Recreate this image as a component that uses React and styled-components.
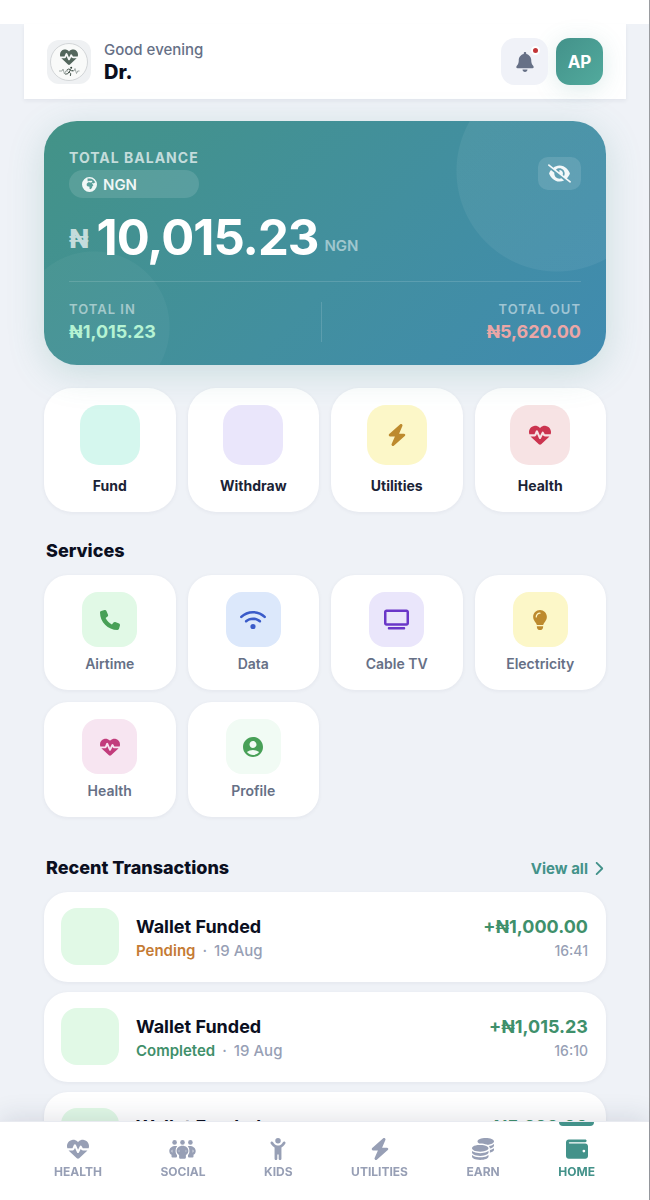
import React from "react";
import styled, { createGlobalStyle } from "styled-components";
import {
  FaBell,
  FaBolt,
  FaChevronRight,
  FaChildReaching,
  FaCoins,
  FaEarthAfrica,
  FaEyeSlash,
  FaHeartPulse,
  FaLightbulb,
  FaPhone,
  FaTv,
  FaWallet,
  FaWifi,
} from "react-icons/fa6";
import { MdAccountCircle } from "react-icons/md";

const colors = {
  primary: "#43928a",
  page: "#eff2f7",
  ink: "#0b0f1f",
  text: "#1b2336",
  muted: "#667086",
  faint: "#979fb5",
  green: "#3f906b",
  orange: "#c57b34",
  white: "#ffffff",
};

const quickActions = [
  { label: "Fund", bg: "#d5f7ee" },
  { label: "Withdraw", bg: "#eae6fb" },
  { label: "Utilities", bg: "#fcf7c8", color: "#bd8a2e", icon: <FaBolt /> },
  { label: "Health", bg: "#f7e3e4", color: "#cb344f", icon: <FaHeartPulse /> },
];

const services = [
  { label: "Airtime", bg: "#e1f9e6", color: "#48a057", icon: <FaPhone /> },
  { label: "Data", bg: "#dce8fb", color: "#3a5bc9", icon: <FaWifi size={26} /> },
  { label: "Cable TV", bg: "#eae6fb", color: "#6a37c8", icon: <FaTv size={25} /> },
  { label: "Electricity", bg: "#fcf7c8", color: "#bd8a2e", icon: <FaLightbulb /> },
  { label: "Health", bg: "#f7e5f1", color: "#c23c7c", icon: <FaHeartPulse /> },
  { label: "Profile", bg: "#f1fbf4", color: "#48a057", icon: <MdAccountCircle size={24} /> },
];

const transactions = [
  { id: 1, status: "Pending", date: "19 Aug", amount: "+₦1,000.00", time: "16:41" },
  { id: 2, status: "Completed", date: "19 Aug", amount: "+₦1,015.23", time: "16:10" },
  { id: 3, status: "Completed", date: "19 Aug", amount: "+₦5,620.00", time: "15:52" },
];

const navItems = [
  { label: "Health", icon: <FaHeartPulse /> },
  { label: "Social", icon: <PeopleIcon /> },
  { label: "Kids", icon: <FaChildReaching /> },
  { label: "Utilities", icon: <FaBolt /> },
  { label: "Earn", icon: <FaCoins /> },
  { label: "Home", icon: <FaWallet />, active: true },
];

function PeopleIcon() {
  return (
    <svg viewBox="0 0 27 21" width="27" height="21" fill="currentColor" aria-hidden="true">
      <circle cx="5.600" cy="3.400" r="2.300" />
      <circle cx="13.500" cy="3.400" r="2.300" />
      <circle cx="21.400" cy="3.400" r="2.300" />
      <path
        fillRule="evenodd"
        d="M6.500 7C3 7 .3 9 .3 12c0 2 .9 3.200 2.200 3.800v1.700a1 1 0 0 0 1 1H7a1 1 0 0 0 1-1V16c-.9-1-1.400-2.400-1.400-4 0-2 .6-3.600 1.600-4.800C7.700 7 7.100 7 6.500 7ZM3.300 10.500v3.200c-1-.9-1-2.300 0-3.200Z"
      />
      <path
        fillRule="evenodd"
        d="M20.500 7c3.500 0 6.200 2 6.200 5 0 2-.9 3.200-2.200 3.800v1.700a1 1 0 0 1-1 1H20a1 1 0 0 1-1-1V16c.9-1 1.400-2.400 1.400-4 0-2-.6-3.600-1.600-4.800.5-.2 1.100-.2 1.700-.2Zm3.200 3.500v3.200c1-.9 1-2.300 0-3.200Z"
      />
      <path
        fillRule="evenodd"
        d="M13.500 6.800c-3.400 0-5.900 2.100-5.900 5.200 0 1.800.9 3.200 2.500 3.900v2.300c0 1 .7 1.600 1.600 1.600h3.600c.9 0 1.600-.6 1.600-1.600v-2.300c1.600-.7 2.500-2.100 2.500-3.900 0-3.100-2.500-5.200-5.900-5.200Zm-3.300 3.900v2.600c-.6-.7-.6-1.900 0-2.600Zm6.600 0c.6.700.6 1.900 0 2.600v-2.600Z"
      />
    </svg>
  );
}

function Logo() {
  return (
    <LogoSvg viewBox="0 0 44 44" role="img" aria-label="Heart and runner logo">
      <rect width="44" height="44" rx="12" fill="#eff1f3" />
      <circle cx="22" cy="22" r="18.500" fill="#f9faf9" stroke="#d3d6d8" />
      <FaHeartPulse x="13" y="8" size={18} color="#53665c" />
      <path
        d="M12 31h3l1-2 1.500 5 1.300-3H21m4 0h2l1-2.500 1.500 5 1.200-2.500h1.800"
        fill="none"
        stroke="#8d9894"
        strokeWidth=".8"
      />
      <circle cx="24.200" cy="27.800" r="1" fill="#33443b" />
      <path
        d="M20 30l1.700-1 1.800.7-1.300 2.500 1.600 1.400-.4 2M21.900 31.900l-1.200 1.900-2.200.3M23.300 29.700l1.100 1.200 1.500-.3"
        fill="none"
        stroke="#33443b"
        strokeWidth=".9"
        strokeLinecap="round"
      />
    </LogoSvg>
  );
}

function Tile({ item, size }) {
  return (
    <TileButton type="button" $size={size}>
      <TileIcon $size={size} $bg={item.bg} $color={item.color}>
        {item.icon}
      </TileIcon>
      <TileLabel $size={size}>{item.label}</TileLabel>
    </TileButton>
  );
}

function TransactionRow({ item }) {
  return (
    <Transaction>
      <TransactionIcon />
      <TransactionBody>
        <TransactionTitle>Wallet Funded</TransactionTitle>
        <TransactionMeta>
          <Status $pending={item.status === "Pending"}>{item.status}</Status>
          <span>·</span>
          <span>{item.date}</span>
        </TransactionMeta>
      </TransactionBody>
      <TransactionSide>
        <Amount>{item.amount}</Amount>
        <Time>{item.time}</Time>
      </TransactionSide>
    </Transaction>
  );
}

export default function App() {
  return (
    <>
      <GlobalStyle />
      <Page>
        <TopStrip />
        <Header>
          <Logo />
          <Greeting>
            <GreetingText>Good evening</GreetingText>
            <UserName>Dr.</UserName>
          </Greeting>
          <HeaderActions>
            <BellButton type="button" aria-label="Notifications">
              <FaBell />
              <BellDot />
            </BellButton>
            <Avatar type="button">AP</Avatar>
          </HeaderActions>
        </Header>

        <Main>
          {/* BALANCE */}
          <BalanceCard>
            <BalanceTop>
              <BalanceHeading>
                <BalanceLabel>TOTAL BALANCE</BalanceLabel>
                <CurrencyPill type="button">
                  <FaEarthAfrica />
                  NGN
                </CurrencyPill>
              </BalanceHeading>
              <EyeButton type="button" aria-label="Hide balance">
                <FaEyeSlash />
              </EyeButton>
            </BalanceTop>
            <BalanceAmount>
              <Naira>₦</Naira>
              <Figure>10,015.23</Figure>
              <Currency>NGN</Currency>
            </BalanceAmount>
            <Totals>
              <Total>
                <TotalLabel>TOTAL IN</TotalLabel>
                <TotalValue $color="#b5f3d3">₦1,015.23</TotalValue>
              </Total>
              <TotalsDivider />
              <Total $right>
                <TotalLabel>TOTAL OUT</TotalLabel>
                <TotalValue $color="#eba6a6">₦5,620.00</TotalValue>
              </Total>
            </Totals>
          </BalanceCard>

          <Grid>
            {quickActions.map((item) => (
              <Tile key={item.label} item={item} size="large" />
            ))}
          </Grid>

          {/* SERVICES */}
          <SectionHeader>
            <SectionTitle>Services</SectionTitle>
          </SectionHeader>
          <Grid>
            {services.map((item) => (
              <Tile key={item.label} item={item} />
            ))}
          </Grid>

          {/* TRANSACTIONS */}
          <SectionHeader $wide>
            <SectionTitle>Recent Transactions</SectionTitle>
            <ViewAll href="#transactions">
              View all
              <FaChevronRight />
            </ViewAll>
          </SectionHeader>
          <TransactionList>
            {transactions.map((item) => (
              <TransactionRow key={item.id} item={item} />
            ))}
          </TransactionList>
        </Main>

        <BottomNav>
          {navItems.map((item) => (
            <NavLink key={item.label} href={"#" + item.label.toLowerCase()} $active={item.active}>
              <NavIcon>{item.icon}</NavIcon>
              {item.label.toUpperCase()}
            </NavLink>
          ))}
        </BottomNav>
      </Page>
    </>
  );
}

const GlobalStyle = createGlobalStyle`
  * {
    box-sizing: border-box;
  }

  body {
    margin: 0;
    background: ${colors.page};
    color: ${colors.ink};
    font-family: Inter, "Liberation Sans", sans-serif;
  }

  button {
    border: 0;
    padding: 0;
    font-family: inherit;
    cursor: pointer;
  }

  a {
    text-decoration: none;
  }
`;

const Page = styled.div`
  min-height: 100vh;
  border-right: 1px solid #9a9ca0;
`;

const TopStrip = styled.div`
  height: 24px;
  background: ${colors.white};
`;

const Header = styled.header`
  display: flex;
  align-items: center;
  gap: 13px;
  margin: 0 23px 0 24px;
  padding: 14px 23px;
  background: ${colors.white};
  box-shadow: 0 2px 4px rgba(30, 41, 70, 0.06);
`;

const LogoSvg = styled.svg`
  width: 44px;
  height: 44px;
`;

const Greeting = styled.div`
  flex: 1;
`;

const GreetingText = styled.div`
  font-size: 15px;
  line-height: 20px;
  font-weight: 500;
  color: ${colors.muted};
`;

const UserName = styled.div`
  font-size: 20px;
  line-height: 24px;
  font-weight: 800;
`;

const HeaderActions = styled.div`
  display: flex;
  gap: 8px;
`;

const BellButton = styled.button`
  position: relative;
  display: grid;
  place-items: center;
  width: 47px;
  height: 47px;
  border-radius: 14px;
  background: #f0f2f8;
  color: ${colors.muted};
  font-size: 20px;
`;

const BellDot = styled.span`
  position: absolute;
  top: 8px;
  right: 8px;
  width: 9px;
  height: 9px;
  border: 2px solid ${colors.white};
  border-radius: 50%;
  background: #c23436;
`;

const Avatar = styled.button`
  width: 47px;
  height: 47px;
  border-radius: 14px;
  background: linear-gradient(135deg, #43928a, #52aa9d);
  box-shadow: 0 4px 24px rgba(67, 146, 138, 0.18);
  color: ${colors.white};
  font-size: 17px;
  font-weight: 700;
`;

const Main = styled.main`
  padding: 22px 43px 18px 44px;
`;

const BalanceCard = styled.section`
  position: relative;
  z-index: 1;
  padding: 28px 25px 19px;
  border-radius: 33px;
  /* soft circles in two corners over the base gradient */
  background:
    radial-gradient(circle at calc(100% - 49px) 50px, rgba(255, 255, 255, 0.06) 100px, transparent 101px),
    radial-gradient(circle at 50px calc(100% - 38px), rgba(255, 255, 255, 0.04) 75px, transparent 76px),
    linear-gradient(135deg, #439387 0%, #428f9f 55%, #408bb0 100%);
  box-shadow: 0 8px 36px rgba(67, 146, 138, 0.22);
  color: ${colors.white};
`;

const BalanceTop = styled.div`
  display: flex;
  align-items: center;
  justify-content: space-between;
`;

const BalanceHeading = styled.div`
  display: flex;
  flex-direction: column;
  gap: 3px;
`;

const BalanceLabel = styled.div`
  font-size: 14px;
  line-height: 18px;
  font-weight: 700;
  letter-spacing: 1px;
  color: rgba(255, 255, 255, 0.7);
`;

const CurrencyPill = styled.button`
  display: flex;
  align-items: center;
  gap: 6px;
  height: 28px;
  padding: 0 13px;
  border-radius: 14px;
  background: rgba(255, 255, 255, 0.12);
  color: rgba(255, 255, 255, 0.92);
  font-size: 15px;
  font-weight: 600;
`;

const EyeButton = styled.button`
  display: grid;
  place-items: center;
  width: 43px;
  height: 33px;
  border-radius: 10px;
  background: rgba(255, 255, 255, 0.12);
  color: rgba(255, 255, 255, 0.92);
  font-size: 23px;
`;

const BalanceAmount = styled.div`
  display: flex;
  align-items: center;
  margin: 12px 0 15px;
`;

const Naira = styled.span`
  font-size: 26px;
  font-weight: 800;
  color: rgba(255, 255, 255, 0.7);
`;

const Figure = styled.strong`
  margin: 0 6px 0 8px;
  font-size: 49px;
  line-height: 56px;
  font-weight: 700;
  letter-spacing: -1px;
`;

const Currency = styled.span`
  padding-top: 14px;
  font-size: 15px;
  font-weight: 600;
  color: rgba(255, 255, 255, 0.5);
`;

const Totals = styled.div`
  display: flex;
  justify-content: space-between;
  padding-top: 18px;
  border-top: 1px solid rgba(255, 255, 255, 0.14);
`;

const Total = styled.div`
  text-align: ${(props) => (props.$right ? "right" : "left")};
`;

const TotalsDivider = styled.div`
  width: 1px;
  height: 40px;
  margin-top: 2px;
  background: rgba(255, 255, 255, 0.14);
`;

const TotalLabel = styled.div`
  font-size: 13px;
  line-height: 18px;
  font-weight: 600;
  letter-spacing: 1px;
  color: rgba(255, 255, 255, 0.5);
`;

const TotalValue = styled.div`
  font-size: 18px;
  line-height: 28px;
  font-weight: 700;
  color: ${(props) => props.$color};
`;

const Grid = styled.div`
  display: grid;
  grid-template-columns: repeat(4, 1fr);
  gap: 12px;

  ${BalanceCard} + & {
    margin-top: 23px;
  }
`;

const TileButton = styled.button`
  display: flex;
  flex-direction: column;
  align-items: center;
  gap: ${(props) => (props.$size === "large" ? "11px" : "7px")};
  padding: 17px 8px 16px;
  border-radius: ${(props) => (props.$size === "large" ? "28px" : "24px")};
  background: ${colors.white};
  box-shadow: 0 1px 4px rgba(30, 41, 70, 0.06);
`;

const TileIcon = styled.span`
  display: grid;
  place-items: center;
  width: ${(props) => (props.$size === "large" ? "60px" : "55px")};
  height: ${(props) => (props.$size === "large" ? "60px" : "55px")};
  border-radius: ${(props) => (props.$size === "large" ? "19px" : "16px")};
  background: ${(props) => props.$bg};
  color: ${(props) => props.$color};
  font-size: ${(props) => (props.$size === "large" ? "22px" : "20px")};
`;

const TileLabel = styled.span`
  font-size: 14px;
  line-height: 20px;
  font-weight: ${(props) => (props.$size === "large" ? 700 : 600)};
  color: ${(props) => (props.$size === "large" ? colors.text : colors.muted)};
`;

const SectionHeader = styled.div`
  display: flex;
  align-items: center;
  justify-content: space-between;
  margin: ${(props) => (props.$wide ? "39px 0 12px 2px" : "27px 0 12px 2px")};
`;

const SectionTitle = styled.h2`
  margin: 0;
  font-size: 18px;
  line-height: 24px;
  font-weight: 800;
`;

const ViewAll = styled.a`
  display: flex;
  align-items: center;
  gap: 3px;
  font-size: 15px;
  font-weight: 700;
  color: ${colors.primary};
`;

const TransactionList = styled.div`
  display: flex;
  flex-direction: column;
  gap: 10px;
`;

const Transaction = styled.article`
  display: flex;
  align-items: center;
  gap: 17px;
  padding: 16px 18px 17px 17px;
  border-radius: 24px;
  background: ${colors.white};
  box-shadow: 0 1px 4px rgba(30, 41, 70, 0.06);
`;

const TransactionIcon = styled.div`
  width: 58px;
  height: 57px;
  border-radius: 16px;
  background: #e1f9e6;
`;

const TransactionBody = styled.div`
  flex: 1;
`;

const TransactionTitle = styled.div`
  font-size: 18px;
  line-height: 28px;
  font-weight: 700;
`;

const TransactionMeta = styled.div`
  display: flex;
  gap: 7px;
  font-size: 15px;
  line-height: 20px;
  font-weight: 500;
  color: ${colors.faint};
`;

const Status = styled.span`
  font-weight: 600;
  color: ${(props) => (props.$pending ? colors.orange : colors.green)};
`;

const TransactionSide = styled.div`
  text-align: right;
`;

const Amount = styled.div`
  font-size: 18px;
  line-height: 28px;
  font-weight: 700;
  color: ${colors.green};
`;

const Time = styled.div`
  font-size: 14px;
  line-height: 20px;
  font-weight: 500;
  color: ${colors.faint};
`;

const BottomNav = styled.nav`
  position: fixed;
  right: 1px;
  bottom: 0;
  left: 0;
  z-index: 2;
  display: flex;
  justify-content: space-between;
  padding: 0 54px;
  border-top: 1px solid #e8eaf0;
  background: ${colors.white};
  box-shadow: 0 -4px 24px rgba(30, 41, 70, 0.12);
`;

const NavLink = styled.a`
  position: relative;
  padding: 16px 0 20px;
  font-size: 12px;
  line-height: 16px;
  font-weight: 700;
  text-align: center;
  color: ${(props) => (props.$active ? colors.primary : colors.faint)};

  &::before {
    content: "";
    position: absolute;
    top: 0;
    left: calc(50% - 18px);
    width: 35px;
    height: 4px;
    border-radius: 0 0 4px 4px;
    background: ${(props) => (props.$active ? colors.primary : "transparent")};
  }
`;

const NavIcon = styled.span`
  display: grid;
  place-items: center;
  height: 22px;
  margin-bottom: 4px;
  font-size: 22px;
`;
